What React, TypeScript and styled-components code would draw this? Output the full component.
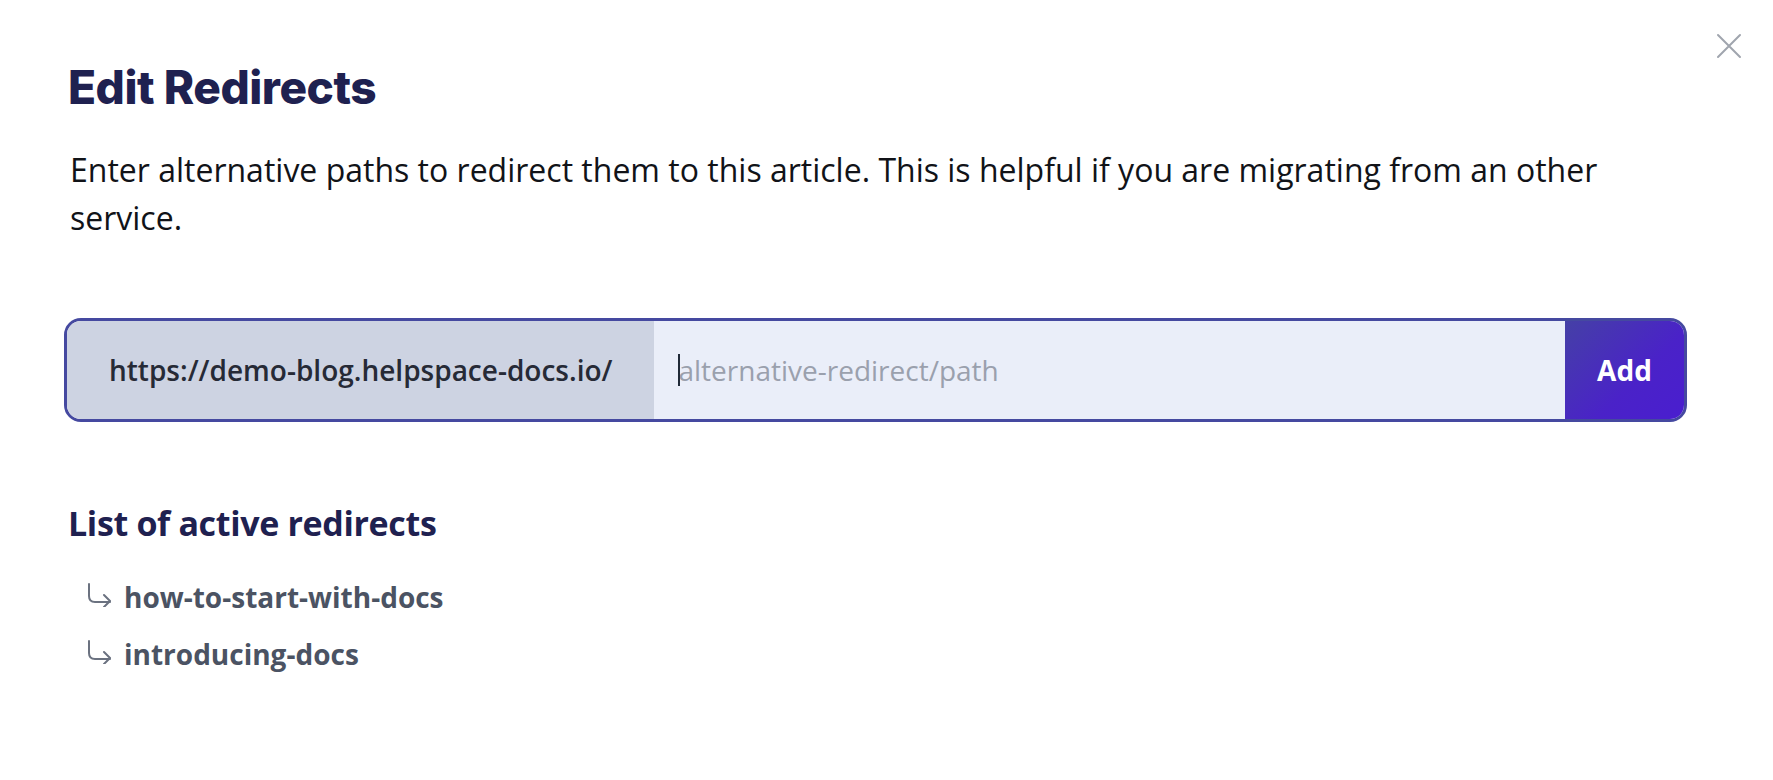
import React, { useState } from "react";
import styled, { createGlobalStyle } from "styled-components";

const GlobalStyle = createGlobalStyle`
  html, body {
    margin: 0;
    padding: 0;
    background: #ffffff;
  }
  body {
    font-family: "Open Sans", "Liberation Sans", sans-serif;
    -webkit-font-smoothing: antialiased;
  }
`;

const redirects = ["how-to-start-with-docs", "introducing-docs"];

function CloseIcon() {
  return (
    <svg width="26" height="26" viewBox="0 0 26 26" fill="none">
      <path
        d="M2 2 L24 24 M24 2 L2 24"
        stroke="#a0a5ae"
        strokeWidth="2"
        strokeLinecap="round"
      />
    </svg>
  );
}

function RedirectArrow() {
  return (
    <svg width="26" height="24" viewBox="0 0 26 24" fill="none">
      <path
        d="M3 1 V13 Q3 19 9 19 H24"
        stroke="#6b7280"
        strokeWidth="2"
        strokeLinecap="round"
        strokeLinejoin="round"
      />
      <path
        d="M18 13 L24 19 L18 25"
        stroke="#6b7280"
        strokeWidth="2"
        strokeLinecap="round"
        strokeLinejoin="round"
        transform="translate(0 -1)"
      />
    </svg>
  );
}

function App() {
  const [path, setPath] = useState("");

  return (
    <>
      <GlobalStyle />
      <Modal>
        <CloseButton aria-label="Close">
          <CloseIcon />
        </CloseButton>

        <Title>Edit Redirects</Title>
        <Description>
          Enter alternative paths to redirect them to this article. This is
          helpful if you are migrating from an other service.
        </Description>

        <InputGroup>
          <Prefix>https://demo-blog.helpspace-docs.io/</Prefix>
          <Field>
            {path === "" && <Caret />}
            <PathInput
              autoFocus
              placeholder="alternative-redirect/path"
              value={path}
              onChange={(e) => setPath(e.target.value)}
            />
          </Field>
          <AddButton>Add</AddButton>
        </InputGroup>

        <ListTitle>List of active redirects</ListTitle>
        <RedirectList>
          {redirects.map((r) => (
            <RedirectItem key={r}>
              <RedirectArrow />
              <span>{r}</span>
            </RedirectItem>
          ))}
        </RedirectList>
      </Modal>
    </>
  );
}

export default App;

const Modal = styled.div`
  position: relative;
  box-sizing: border-box;
  width: 100%;
  min-height: 780px;
  padding: 60px 86px 0 70px;
  background: #ffffff;
`;

const CloseButton = styled.button`
  position: absolute;
  top: 33px;
  right: 31px;
  padding: 0;
  border: none;
  background: transparent;
  display: flex;
  cursor: pointer;
`;

const Title = styled.h1`
  margin: 0 0 0 -2px;
  font-family: Inter, "Open Sans", sans-serif;
  font-size: 46px;
  line-height: 54px;
  font-weight: 800;
  letter-spacing: -0.01em;
  color: #1f2150;
`;

const Description = styled.p`
  margin: 32px 0 0;
  font-size: 32px;
  line-height: 48px;
  font-weight: 400;
  color: #111318;
`;

const InputGroup = styled.div`
  display: flex;
  align-items: stretch;
  height: 98px;
  margin: 76px 0 0 -6px;
  border: 3px solid #4549a0;
  border-radius: 17px;
  overflow: hidden;
`;

const Prefix = styled.div`
  display: flex;
  align-items: center;
  padding: 0 42px;
  background: #cdd3e2;
  color: #262a36;
  font-size: 28px;
  font-weight: 600;
  white-space: nowrap;
`;

const Field = styled.div`
  position: relative;
  flex: 1;
  display: flex;
  min-width: 0;
  background: #eaeef9;
`;

const Caret = styled.span`
  position: absolute;
  left: 24px;
  top: 50%;
  width: 2px;
  height: 32px;
  margin-top: -16px;
  background: #1f2937;
`;

const PathInput = styled.input`
  flex: 1;
  min-width: 0;
  border: none;
  outline: none;
  padding: 0 24px;
  background: transparent;
  font-family: "Open Sans", sans-serif;
  font-size: 28px;
  color: #1f2937;
  caret-color: #1f2937;

  &::placeholder {
    color: #9aa0ad;
  }
`;

const AddButton = styled.button`
  width: 119px;
  border: none;
  background: linear-gradient(135deg, #4540a6 0%, #4a22c8 60%, #4a1ecf 100%);
  color: #ffffff;
  font-family: "Open Sans", sans-serif;
  font-size: 28px;
  font-weight: 700;
  cursor: pointer;
`;

const ListTitle = styled.h3`
  margin: 79px 0 0 -2px;
  font-size: 34px;
  line-height: 44px;
  font-weight: 700;
  letter-spacing: -0.01em;
  color: #1f2150;
`;

const RedirectList = styled.ul`
  list-style: none;
  margin: 24px 0 0;
  padding: 0 0 0 16px;
`;

const RedirectItem = styled.li`
  display: flex;
  align-items: center;
  gap: 12px;
  font-size: 28px;
  line-height: 57px;
  font-weight: 700;
  color: #4b5363;

  svg {
    margin-top: -6px;
  }
`;
